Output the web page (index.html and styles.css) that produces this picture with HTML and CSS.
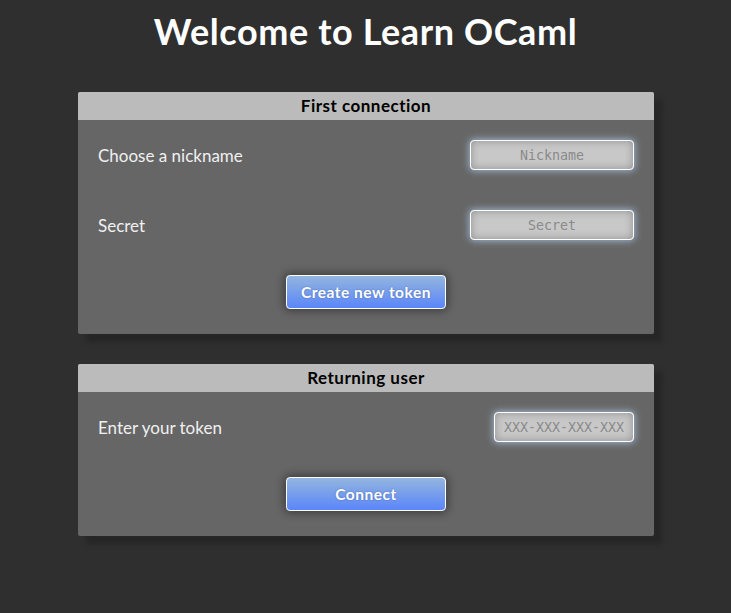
FILE: index.html
```html
<!DOCTYPE html>
<html>
<head>
<meta charset="utf-8">
<link rel="stylesheet" href="styles.css">
</head>
<body>
<h1 class="title">Welcome to Learn OCaml</h1>
<div class="cards">
  <section class="card">
    <h2 class="card-head">First connection</h2>
    <div class="card-body">
      <div class="row">
        <label class="label">Choose a nickname</label>
        <input class="field" type="text" placeholder="Nickname">
      </div>
      <div class="row row-last">
        <label class="label">Secret</label>
        <input class="field" type="text" placeholder="Secret">
      </div>
      <div class="actions">
        <button class="btn">Create new token</button>
      </div>
    </div>
  </section>
  <section class="card">
    <h2 class="card-head">Returning user</h2>
    <div class="card-body">
      <div class="row row-last">
        <label class="label">Enter your token</label>
        <input class="field field-token" type="text" placeholder="XXX-XXX-XXX-XXX">
      </div>
      <div class="actions">
        <button class="btn">Connect</button>
      </div>
    </div>
  </section>
</div>
</body>
</html>
```

FILE: styles.css
```css
html, body {
  margin: 0;
  padding: 0;
}
body {
  background: #2f2f2f;
  font-family: Lato, "Open Sans", sans-serif;
  color: #eee;
  min-height: 613px;
}
.title {
  margin: 0;
  padding-top: 9px;
  height: 80px;
  box-sizing: border-box;
  text-align: center;
  color: #fff;
  font-size: 36px;
  font-weight: 700;
  letter-spacing: 0.6px;
  line-height: 44px;
}
.cards {
  display: flex;
  flex-direction: column;
  gap: 30px;
  padding: 12px 77px 0 78px;
}
.card {
  width: 576px;
  border-radius: 2px;
  overflow: hidden;
  box-shadow: 8px 8px 5px #262626;
  background: #666;
}
.card-head {
  margin: 0;
  height: 28px;
  line-height: 28px;
  background: #bbb;
  color: #000;
  text-align: center;
  font-size: 17px;
  font-weight: 700;
  letter-spacing: 0.5px;
}
.card-body {
  padding: 20px 20px 25px 20px;
}
.row {
  display: flex;
  justify-content: space-between;
  align-items: center;
  height: 30px;
  margin-bottom: 40px;
}
.row-last {
  margin-bottom: 35px;
}
.label {
  font-size: 17px;
  color: #f0f0f0;
}
.field {
  width: 164px;
  height: 30px;
  box-sizing: border-box;
  border: 1px solid #fff;
  border-radius: 4px;
  background: #c8c8c8;
  box-shadow: 0 0 7px 1px rgba(175, 205, 240, 0.75), inset 0 0 9px rgba(0,0,0,0.28);
  font-family: "DejaVu Sans Mono", monospace;
  font-size: 13.3px;
  text-align: center;
  color: #777;
  outline: none;
  padding: 0 4px;
}
.field::placeholder {
  color: #8a8a8a;
}
.field-token {
  width: 140px;
}
.actions {
  display: flex;
  justify-content: center;
}
.btn {
  width: 160px;
  height: 34px;
  border: 1px solid #fff;
  border-radius: 4px;
  background: linear-gradient(#93b5df, #5a86f9);
  color: #fff;
  font-family: Lato, "Open Sans", sans-serif;
  font-weight: 700;
  font-size: 15.5px;
  letter-spacing: 0.5px;
  text-shadow: 0 0 2px rgba(0,0,0,0.3);
  box-shadow: 0 0 8px 2px rgba(0,0,0,0.4);
  cursor: pointer;
}
```
